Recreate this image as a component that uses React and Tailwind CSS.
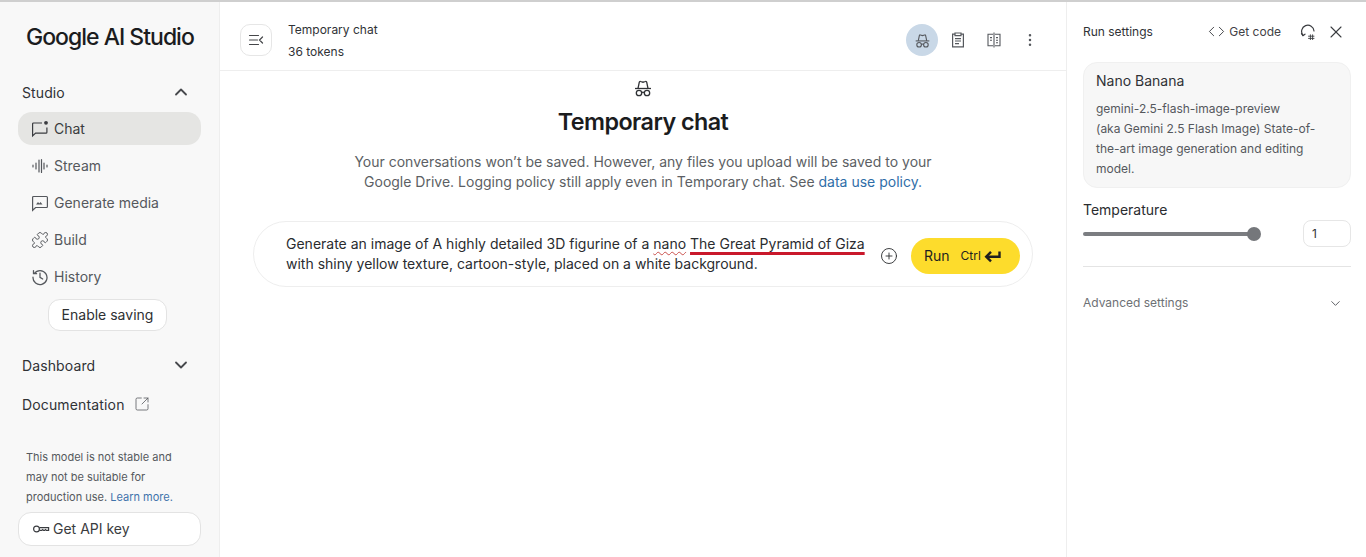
import { ChevronUp, ChevronDown, SquareArrowOutUpRight, X, Code, EllipsisVertical, CirclePlus, Puzzle } from 'lucide-react'

function HatIcon({ size = 18 }) {
  return (
    <svg width={size} height={size} viewBox="0 0 20 20" fill="none" stroke="currentColor" strokeWidth="1.3">
      <path d="M2 10.5h16" />
      <path d="M5 10.5 6.3 4.2a1 1 0 0 1 1.3-.7L10 4.2l2.4-.7a1 1 0 0 1 1.3.7L15 10.5" />
      <circle cx="6" cy="15" r="2.7" />
      <circle cx="14" cy="15" r="2.7" />
      <path d="M8.7 14.6c.8-.5 1.8-.5 2.6 0" />
    </svg>
  )
}

function ChatIcon() {
  return (
    <svg width="18" height="18" viewBox="0 0 18 18" fill="none" stroke="currentColor" strokeWidth="1.2">
      <path d="M11 3H2.5a.9.9 0 0 0-.9.9v12l3-2.8H15a.9.9 0 0 0 .9-.9V7.5" />
      <circle cx="15" cy="2.8" r="1.9" fill="currentColor" stroke="none" />
    </svg>
  )
}

function StreamIcon() {
  return (
    <svg width="18" height="18" viewBox="0 0 18 18" fill="none" stroke="currentColor" strokeWidth="1.2" strokeLinecap="round">
      <path d="M2 8v2M5 6v6M8 3v12M10.5 2.5v13M13 6v6M16 8v2" />
    </svg>
  )
}

function MediaIcon() {
  return (
    <svg width="18" height="18" viewBox="0 0 18 18" fill="none" stroke="currentColor" strokeWidth="1.2">
      <path d="M2.5 2.5h13a.9.9 0 0 1 .9.9v9.2a.9.9 0 0 1-.9.9H4.6l-3 2.8V3.4a.9.9 0 0 1 .9-.9Z" />
      <path d="M5 10.5 7 8l1.3 1.5L9.5 8l2 2.5Z" fill="currentColor" stroke="none" />
    </svg>
  )
}

function HistoryIcon() {
  return (
    <svg width="18" height="18" viewBox="0 0 18 18" fill="none" stroke="currentColor" strokeWidth="1.3" strokeLinecap="round">
      <path d="M3.4 5.4A7 7 0 1 1 2 9.2" />
      <path d="M2.5 2.6v3.1h3.1" />
      <path d="M9 5.2v4.1l2.7 1.7" />
    </svg>
  )
}

function KeyIcon() {
  return (
    <svg width="18" height="18" viewBox="0 0 18 18" fill="none" stroke="currentColor" strokeWidth="1.2">
      <circle cx="4.5" cy="9" r="2.9" />
      <path d="M7.4 7.6h9.2v2.8h-2.2l-.9-.8-.9.8h-1l-.9-.8-.9.8H7.4" />
    </svg>
  )
}

function PanelIcon() {
  return (
    <svg width="16" height="16" viewBox="0 0 16 16" fill="none" stroke="currentColor" strokeWidth="1.2" strokeLinecap="round">
      <path d="M1.5 3.5h9M1.5 8h8M1.5 12.5h9M14.5 5 11.5 8l3 3" />
    </svg>
  )
}

function ClipboardIcon() {
  return (
    <svg width="18" height="18" viewBox="0 0 18 18" fill="none" stroke="currentColor" strokeWidth="1.2">
      <path d="M6 3.2H3.6v12.6h10.8V3.2H12" />
      <path d="M6 2h6v2.6H6Z" />
      <path d="M6 7.6h6M6 10h6M6 12.6h4" />
    </svg>
  )
}

function BookIcon() {
  return (
    <svg width="18" height="18" viewBox="0 0 18 18" fill="none" stroke="currentColor" strokeWidth="1.1">
      <path d="M8 3.2H3v11.6h5M10 3.2h5v11.6h-5" />
      <path d="M9 1.5v15M5 6.6h2M5 9.2h2M11 6.6h2M11 9.2h2M11 11.8h2" />
    </svg>
  )
}

function ResetIcon() {
  return (
    <svg width="16" height="16" viewBox="0 0 16 16" fill="none" stroke="currentColor" strokeWidth="1.2" strokeLinecap="round">
      <path d="M3 11.3A6.2 6.2 0 1 1 14 7" />
      <path d="M1.5 9.6 3 11.6l2-1.4" />
      <path d="M8.5 12.2h5.5M8.5 14.4h5.5M10.4 10.8v4.8M12.6 10.8v4.8" strokeWidth="0.9" />
    </svg>
  )
}

function EnterIcon() {
  return (
    <svg width="17" height="14" viewBox="0 0 17 14" fill="none" stroke="currentColor" strokeWidth="2.4">
      <path d="M15.5 2.5v5.2H3" />
      <path d="M7 2.8 2.2 7.7 7 12.4" />
    </svg>
  )
}

function NavItem({ icon, label, active }) {
  return (
    <div className={`flex items-center h-[33px] rounded-[14px] pl-[13px] gap-[5px] text-[14px] ${active ? 'bg-[#e5e5e3] text-[#3a3c40]' : 'text-[#55585d]'}`}>
      {icon}
      <span>{label}</span>
    </div>
  )
}

function Sidebar() {
  return (
    <aside className="w-[220px] shrink-0 bg-[#f8f8f8] border-r border-[#eeeeee] flex flex-col h-full">
      <div className="pl-[26px] pt-[19px] h-[72px] text-[23px] leading-[32px] font-medium tracking-[-1px] text-[#1b1c1e] whitespace-nowrap">Google AI Studio</div>
      <div className="flex items-center justify-between pl-[22px] pr-[28px] h-[36px] text-[14px] tracking-[0.1px] text-[#303236]">
        <span>Studio</span>
        <ChevronUp size={20} strokeWidth={2.2} className="text-[#47494d]" />
      </div>
      <nav className="flex flex-col gap-[4px] pl-[18px] pr-[18px] mt-[2px]">
        <NavItem icon={<ChatIcon />} label="Chat" active />
        <NavItem icon={<StreamIcon />} label="Stream" />
        <NavItem icon={<MediaIcon />} label="Generate media" />
        <NavItem icon={<Puzzle size={18} strokeWidth={1.3} />} label="Build" />
        <NavItem icon={<HistoryIcon />} label="History" />
      </nav>
      <div className="pl-[48px] mt-[6px]">
        <button className="h-[32px] w-[119px] pb-[1px] rounded-[12px] border border-[#e3e3e3] bg-white text-[14px] text-[#2e3033]">Enable saving</button>
      </div>
      <div className="flex items-center justify-between pl-[22px] pr-[28px] mt-[21px] h-[26px] text-[14px] tracking-[0.12px] text-[#303236]">
        <span>Dashboard</span>
        <ChevronDown size={20} strokeWidth={2.2} className="text-[#47494d]" />
      </div>
      <div className="flex items-center gap-[9px] pl-[22px] mt-[13px] h-[26px] text-[14px] tracking-[0.15px] text-[#303236]">
        <span>Documentation</span>
        <SquareArrowOutUpRight size={16} strokeWidth={1.2} className="text-[#55585d]" />
      </div>
      <p className="pl-[26px] pr-[40px] mt-[30px] text-[11px] leading-[20px] text-[#55585d]">
        This model is not stable and may not be suitable for production use. <span className="text-[#3f73ab]">Learn more.</span>
      </p>
      <div className="px-[18px] mt-[5px]">
        <button className="flex items-center gap-[3px] pl-[13px] pb-[1px] w-[183px] h-[34px] rounded-[13px] border border-[#e3e3e3] bg-white text-[14px] text-[#3a3c40]">
          <KeyIcon />
          <span>Get API key</span>
        </button>
      </div>
    </aside>
  )
}

function TopBar() {
  return (
    <header className="h-[69px] shrink-0 border-b border-[#eeeeee] flex items-center pt-[8px] pl-[20px] pr-[18px]">
      <button className="w-[32px] h-[32px] rounded-[10px] border border-[#e6e6e6] flex items-center justify-center text-[#444649]">
        <PanelIcon />
      </button>
      <div className="ml-[16px] pt-[1px] text-[12px] leading-[22px] text-[#303236]">
        <div>Temporary chat</div>
        <div>36 tokens</div>
      </div>
      <div className="ml-auto flex items-center text-[#55585d]">
        <span className="w-[32px] h-[32px] rounded-full bg-[#c9d8e7] flex items-center justify-center">
          <HatIcon size={17} />
        </span>
        <span className="w-[36px] flex justify-center ml-[2px]"><ClipboardIcon /></span>
        <span className="w-[36px] flex justify-center"><BookIcon /></span>
        <span className="w-[36px] flex justify-center"><EllipsisVertical size={16} strokeWidth={1.8} /></span>
      </div>
    </header>
  )
}

function PromptBox() {
  return (
    <div className="mt-[29px] w-[780px] h-[66px] rounded-[33px] border border-[#eeeeee] bg-white flex items-center pl-[32px] pr-[12px]">
      <p className="w-[582px] shrink-0 text-[14px] leading-[20px] text-[#2a2c2f] whitespace-nowrap">
        Generate an image of A highly detailed 3D figurine of a <span className="underline decoration-wavy decoration-[#c9504c] decoration-1 underline-offset-2">nano</span>{' '}
        <span className="underline decoration-[#c9182b] decoration-[3px] underline-offset-[3px]">The Great Pyramid of Giza</span>
        <br />
        with shiny yellow texture, cartoon-style, placed on a white background.
      </p>
      <CirclePlus size={18} strokeWidth={1.2} className="ml-[12px] mt-[3px] shrink-0 text-[#2a2c2f]" />
      <button className="ml-[13px] mt-[3px] w-[109px] h-[36px] shrink-0 rounded-full bg-[#fddc2c] flex items-center pl-[13px] text-[#1f1f1f]">
        <span className="text-[14px]">Run</span>
        <span className="ml-[11px] text-[12px]">Ctrl</span>
        <span className="ml-[3px]"><EnterIcon /></span>
      </button>
    </div>
  )
}

function ChatArea() {
  return (
    <main className="flex-1 min-w-0 flex flex-col">
      <TopBar />
      <div className="flex flex-col items-center pt-[7px]">
        <span className="text-[#303236]"><HatIcon size={20} /></span>
        <h1 className="text-[23.3px] leading-[32px] mt-[8px] font-semibold tracking-[-0.55px] text-[#1b1c1e]">Temporary chat</h1>
        <p className="mt-[14px] text-center text-[14px] leading-[20px] text-[#5c5f64] w-[620px]">
          Your conversations won’t be saved. However, any files you upload will be saved to your Google Drive. Logging policy still apply even in Temporary chat. See <span className="text-[#2f6ea8]">data use policy.</span>
        </p>
        <PromptBox />
      </div>
    </main>
  )
}

function RunSettings() {
  return (
    <aside className="w-[300px] shrink-0 border-l border-[#eeeeee] pl-[16px] pr-[15px] flex flex-col">
      <div className="h-[60px] flex items-center pb-[1px] text-[12px] text-[#303236]">
        <span>Run settings</span>
        <Code size={17} strokeWidth={1.3} className="ml-auto text-[#3a3c40]" />
        <span className="ml-[4px] text-[#3f4145]">Get code</span>
        <span className="ml-[19px] text-[#3a3c40]"><ResetIcon /></span>
        <X size={20} strokeWidth={1.3} className="ml-[10px] mr-[5px] text-[#3a3c40]" />
      </div>
      <div className="h-[126px] rounded-[14px] bg-[#f7f7f7] border border-[#f0f0f0] pl-[12px] pr-[20px] pt-[7px]">
        <div className="text-[14px] leading-[21px] text-[#303236]">Nano Banana</div>
        <p className="mt-[8px] text-[12px] leading-[20px] text-[#55585d]">
          gemini-2.5-flash-image-preview<br />
          (aka Gemini 2.5 Flash Image) State-of-the-art image generation and editing model.
        </p>
      </div>
      <div className="mt-[12px] text-[14px] leading-[20px] text-[#2a2c2f]">Temperature</div>
      <div className="flex items-center">
        <div className="w-[171px] h-[4px] rounded-full bg-[#7b7d81] relative">
          <span className="absolute right-[-7px] top-[-5px] w-[14px] h-[14px] rounded-full bg-[#75777b]" />
        </div>
        <div className="ml-auto w-[48px] h-[27px] rounded-[8px] border border-[#e6e6e6] pl-[8px] flex items-center text-[12px] text-[#303236]">1</div>
      </div>
      <div className="mt-[19px] border-t border-[#e4e4e4]" />
      <div className="mt-[27px] flex items-center justify-between pr-[8px] text-[12px] text-[#6d7074]">
        <span>Advanced settings</span>
        <ChevronDown size={15} strokeWidth={1.5} className="text-[#55585d]" />
      </div>
    </aside>
  )
}

export default function App() {
  return (
    <div className="h-[557px] w-[1366px] overflow-hidden bg-white border-t-2 border-[#cfcfcf] flex font-['Inter',sans-serif]">
      <Sidebar />
      <ChatArea />
      <RunSettings />
    </div>
  )
}
